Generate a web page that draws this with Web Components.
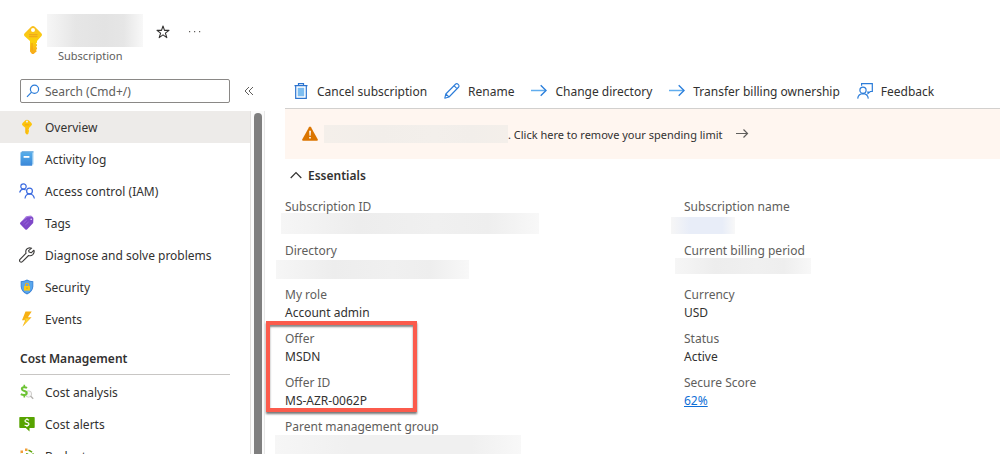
<!DOCTYPE html>
<html lang="en">
<head>
<meta charset="utf-8">
<meta name="viewport" content="width=device-width, initial-scale=1">
<title>Subscription</title>
<style>
  body { margin: 0; font: 12px/18px "Noto Sans", "Open Sans", sans-serif; color: #323130; background: #fff; }
</style>
</head>
<body>
<subscription-page></subscription-page>

<script>
const icons = {
  key: `<svg viewBox="0 0 18 28"><defs><linearGradient id="k" x2="0" y2="1"><stop stop-color="#f9bd1e"/><stop offset=".55" stop-color="#fbd10c"/><stop offset="1" stop-color="#f7a81c"/></linearGradient></defs><path fill="url(#k)" fill-rule="evenodd" d="M7.200.7q1.800-1.400 3.600 0l6.500 6.600q1.400 1.500 0 3L13 15v1.500l-1 1 1 1v1.300l-1 1 1 1V23l-1 1 .8 1.200L9.600 28H8l-2-2.400V15L.7 10.300q-1.400-1.500 0-3zM9 2a2 2 0 1 0 0 4 2 2 0 0 0 0-4z"/><path d="M5 8h8.500v1.200H5zm0 2h8.500v1.200H5z" fill="#f0a81a"/><path d="M7.500 17h1v8l-1-1z" fill="#f0a010"/></svg>`,
  smallkey: `<svg viewBox="0 0 16 16"><path fill="#fcc40c" fill-rule="evenodd" d="M6.400 1.300Q8 0 9.600 1.300l2.800 2.600q1.300 1.300 0 2.600L10 9v1l-.6.700.6.800v1l-.6.700.4.700L8.500 15.500h-.8l-1.200-1.300V9L3.600 6.500q-1.300-1.300 0-2.600zM8 1.500a1.100 1.100 0 1 0 0 2.200 1.100 1.100 0 0 0 0-2.200z"/><path fill="#f5ae10" d="M5.800 5h4.400v1.500H5.800zM6.500 9h1v5.500l-1-.8z"/></svg>`,
  star: `<svg viewBox="0 0 14 14" fill="none" stroke="#323130" stroke-width="1.100" stroke-linejoin="round"><path d="M7 1l1.500 4.400H13L9.400 8.100l1.400 4.500L7 9.900l-3.800 2.700 1.400-4.500L1 5.400h4.500z"/></svg>`,
  more: `<svg viewBox="0 0 14 14" fill="#605e5c"><path d="M1 6h1.200v1.200H1zm5 0h1.200v1.200H6zm5 0h1.200v1.200H11z"/></svg>`,
  search: `<svg viewBox="0 0 14 14" fill="none" stroke="#2b7cd9" stroke-width="1.200"><circle cx="8.500" cy="5.300" r="4.100"/><path d="M5.600 8.200L1 12.800"/></svg>`,
  collapse: `<svg viewBox="0 0 10 10" fill="none" stroke="#605e5c"><path d="M5 1L1 5l4 4M9 1L5 5l4 4"/></svg>`,
  log: `<svg viewBox="0 0 16 16"><defs><linearGradient id="l" x2="0" y2="1"><stop stop-color="#55adea"/><stop offset="1" stop-color="#3b87d8"/></linearGradient></defs><path fill="#a5d2f2" d="M3 .5h11.500v13H3z"/><path fill="url(#l)" d="M1.500 1.500h11.700v13.300H2.300q-.8 0-.8-.8z"/><path fill="#2f86cf" d="M1.500 1.500l1.500-1h11.500v.8z"/><path fill="#fff" d="M4.600 5h5.800v1.800H4.600z"/></svg>`,
  people: `<svg viewBox="0 0 16 16" fill="none" stroke="#3b6be0" stroke-width="1.200"><circle cx="4.500" cy="3.500" r="2.700"/><circle cx="10.500" cy="8" r="2.900"/><path d="M.6 9.500Q1.500 6.400 4.500 6.200l2.200.8M6 15.500q.5-4.400 4.500-4.600 4 .2 4.900 4.600"/></svg>`,
  tag: `<svg viewBox="0 0 16 16"><path fill="#a77be0" d="M7 1.200l5-.7 1.800 1.500L8 9 2 7z"/><path fill="#7f48c8" d="M8.300 2.200l4.700-.2q1.500 0 1.400 1.500L14.200 8 8 14.500q-.8.700-1.600 0L1.300 9.200q-.7-.8 0-1.600z"/><circle cx="12.200" cy="4.200" r=".8" fill="#e9dafa"/><path d="M4.500 8l3.300-3M6.300 10l3.300-3" stroke="#9b68dc"/></svg>`,
  wrench: `<svg viewBox="0 0 16 16" fill="none" stroke="#3b3a39" stroke-width="1.100" stroke-linejoin="round"><path d="M12.600 1.200Q9.600.1 7.700 2.200q-1.500 1.900-.6 4L1 12.300q-1 1.300 0 2.300 1.200 1 2.400 0L9.600 8.500q2.300.8 4.200-.9 2-2.100 1.100-4.400l-2.700 2.600L10.100 5l-.5-1.300z"/></svg>`,
  shield: `<svg viewBox="0 0 16 16"><path fill="#3a82d6" d="M8 .5q2.600 1.700 6.300 1.800V7.500Q14 12.500 8 15.600 2 12.500 1.700 7.500V2.300Q5.400 2.200 8 .5z"/><path fill="#5aa7ec" d="M8 1.500q2.300 1.300 5.500 1.500v4.500q-.3 4.200-5.500 7-5.200-2.800-5.500-7V3Q5.700 2.800 8 1.500z"/><path fill="#f8c818" d="M5 7h6v4.600H5z"/><path d="M6.400 7V5.700Q6.500 4.200 8 4.200t1.600 1.500V7" fill="none" stroke="#f2b31b" stroke-width="1.100"/><path fill="#c99400" d="M7.500 8.400h1v1.400h-1z"/></svg>`,
  bolt: `<svg viewBox="0 0 16 16"><path fill="#f7b012" d="M6.500.5h6.200L8.900 6.200h3.700L3.400 15.700l2.900-6.400H3z"/><path fill="#fdd835" d="M6.500 7.500h4l-5.600 6.300 2.300-5.200H4.500z"/></svg>`,
  analysis: `<svg viewBox="0 0 16 16"><circle cx="9.500" cy="10" r="3.200" fill="#f5f5f5" stroke="#d2d0ce"/><path stroke="#b3b0ad" stroke-width="1.300" d="M11.500 12l2.700 2.700"/><path fill="none" stroke="#6cc333" stroke-width="1.900" d="M8 4Q6.900 3.200 5 3.300 2.800 3.500 2.800 5q.1 1.300 2.500 2 2.600.7 2.500 2.200-.2 1.800-2.700 1.800-1.800 0-3.300-.9"/><path stroke="#6cc333" stroke-width="1.600" d="M5.300.8v2.500M5.300 11v2.500"/></svg>`,
  alert: `<svg viewBox="0 0 16 16"><path fill="#57a300" d="M1 1h14q.7 0 .7.700v9.600q0 .7-.7.700h-4.500v3.500L6.800 12H1q-.7 0-.7-.7V1.700q0-.7.700-.7z"/><path fill="none" stroke="#fff" stroke-width="1.200" d="M10 4.200q-1-.8-2.300-.7Q5.900 3.700 6 5q0 .9 1.900 1.400 2.200.5 2.100 1.700-.2 1.500-2.200 1.500-1.200 0-2.200-.7M8 2.200v1.500M8 9.500v1.500"/></svg>`,
  budget: `<svg viewBox="0 0 16 16" fill="none"><path d="M9.500 2.200q5 1.300 4.800 6.300-.5 5.500-6.300 6-5.700-.5-6.300-6 0-1.400.5-2.600" stroke="#57a300" stroke-width="1.400" stroke-dasharray="4 1.500"/><path d="M8 5v7M10 6.500Q6 5 6 7t4 2-4 2.500" stroke="#57a300"/><path fill="#f29d38" d="M1.500 2.500h2.500v2.500H1.500zM6 .5h2.500V3H6z"/></svg>`,
  trash: `<svg viewBox="0 0 16 16" fill="none"><path fill="#7dbdf0" d="M4.700 4.800h6.500v8.500H4.700z"/><path stroke="#2b73cf" stroke-width="1.200" d="M1.500 2.600h13M5.500 2.400V.7h5v1.700M2.700 2.800v12.500h10.600V2.800"/></svg>`,
  pencil: `<svg viewBox="0 0 16 16" fill="none" stroke="#2b7cd9" stroke-width="1.100" stroke-linejoin="round"><path d="M.8 15.200l1-4.200L11.700 1q1.200-.9 2.500.3t.5 2.700L5 14zM1.800 11L5 14M10 2.700l3.200 3.100"/></svg>`,
  arrow: `<svg viewBox="0 0 16 16" fill="none"><path stroke="#61adee" stroke-width="1.500" d="M0 7.500h14.500"/><path stroke="#2d80dc" stroke-width="1.400" d="M9.700 2.300l5.300 5.200-5.300 5.200"/></svg>`,
  feedback: `<svg viewBox="0 0 16 16" fill="none" stroke="#2b7cd9" stroke-width="1.200"><path d="M4.600 2.800V.7h10.700v7.800h-2l-2.300 2V8.200"/><circle cx="6" cy="7.200" r="3.100"/><path d="M.7 15.600q.5-4.800 5.300-5 4.800.2 5.300 5"/></svg>`,
  warning: `<svg viewBox="0 0 16 16"><path fill="#db7500" d="M7 1.300q1-1.500 2 0l6.700 12q.7 1.500-.9 1.500H1.200q-1.600 0-.9-1.500z"/><path fill="#fff" d="M7.200 4.800h1.700l-.3 5H7.500zM7.200 11h1.600v1.600H7.200z"/></svg>`,
  next: `<svg viewBox="0 0 14 14" fill="none" stroke="#605e5c" stroke-width="1.200"><path d="M1 6.500h11.500M8.500 2.500l4 4-4 4"/></svg>`,
  chevron: `<svg viewBox="0 0 12 12" fill="none" stroke="#323130" stroke-width="1.200"><path d="M.7 8L6 2.500 11.300 8"/></svg>`
};

function define(name, html, setup) {
  const template = document.createElement("template");
  template.innerHTML = html;
  customElements.define(name, class extends HTMLElement {
    constructor() {
      super();
      this.attachShadow({ mode: "open" }).append(template.content.cloneNode(true));
    }
    connectedCallback() { if (setup) setup(this, this.shadowRoot); }
  });
}

define("ui-icon", `
  <style>
    :host { display: block; flex: none; width: 16px; height: 16px; }
    div, svg { display: block; width: 100%; height: 100%; }
  </style><div></div>`,
  (el, root) => { root.querySelector("div").innerHTML = icons[el.getAttribute("name")]; });

define("masked-value", `
  <style>
    :host { display: block; flex: none; width: var(--w); height: var(--h);
      background: linear-gradient(90deg, var(--edge, #f6f6f6), var(--tone, #ededed) 30%, var(--mid, #f0f0f0) 60%, var(--tone, #eee) 80%, var(--edge, #f8f8f8)); }
  </style>`);

define("page-header", `
  <style>
    :host { display: flex; align-items: flex-start; height: 79px; padding: 0 24px; box-sizing: border-box; }
    .key { width: 18px; height: 28px; margin-top: 26px; }
    .title { margin: 14px 13px 0 5px; }
    masked-value { --w: 96px; --h: 33px; --tone: #e6e6e6; --mid: #e3e3e3; }
    p { margin: 0 0 0 11px; color: #605e5c; font-size: 11px; }
    button { border: 0; padding: 0; background: none; margin: 25px 18px 0 0; }
    button ui-icon { width: 14px; height: 14px; }
  </style>
  <ui-icon class="key" name="key"></ui-icon>
  <div class="title"><masked-value></masked-value><p>Subscription</p></div>
  <button aria-label="Add to favorites"><ui-icon name="star"></ui-icon></button>
  <button aria-label="More"><ui-icon name="more"></ui-icon></button>`);

define("nav-item", `
  <style>
    :host { display: block; }
    a { display: flex; align-items: center; gap: 10px; height: 32px; padding: 0 19px; color: inherit; text-decoration: none; }
    slot { display: block; padding-top: 2px; }
    :host([selected]) a { background: #edebe9; }
  </style>
  <a href="#"><slot></slot></a>`,
  (el, root) => {
    const icon = document.createElement("ui-icon");
    icon.setAttribute("name", el.getAttribute("icon"));
    root.querySelector("a").prepend(icon);
  });

define("side-nav", `
  <style>
    :host { display: flex; flex-direction: column; width: 265px; flex: none; min-height: 0; }
    .search { display: flex; align-items: center; gap: 14px; padding: 0 11px 8px 20px; }
    label { display: flex; flex: 1; align-items: center; gap: 5px; height: 24px; box-sizing: border-box; border: 1px solid #8a8886; border-radius: 2px; padding: 0 5px; }
    label ui-icon { width: 14px; height: 14px; }
    input { flex: 1; min-width: 0; height: 22px; box-sizing: border-box; border: 0; padding: 0; outline: 0; font: inherit; background: none; }
    input::placeholder { color: #605e5c; opacity: 1; }
    button { border: 0; padding: 0; background: none; }
    button ui-icon { width: 10px; height: 10px; }
    .body { display: flex; flex: 1; min-height: 0; }
    nav { flex: 1; overflow: hidden; border-right: 1px solid #e1dfdd; }
    h2 { margin: 9px 20px 1px; padding: 6px 0; border-bottom: 1px solid #c8c6c4; font-size: 12px; line-height: 18px; font-weight: 600; }
    .track { width: 8px; padding: 2px 2px 0 3px; border-right: 1px solid #e8e8e8; background: #fbfbfb; }
    .thumb { height: 100%; border-radius: 4px 4px 0 0; background: #7f7f7f; }
  </style>
  <div class="search">
    <label><ui-icon name="search"></ui-icon><input type="text" aria-label="Search" placeholder="Search (Cmd+/)"></label>
    <button aria-label="Collapse menu"><ui-icon name="collapse"></ui-icon></button>
  </div>
  <div class="body">
    <nav>
      <nav-item icon="smallkey" selected>Overview</nav-item>
      <nav-item icon="log">Activity log</nav-item>
      <nav-item icon="people">Access control (IAM)</nav-item>
      <nav-item icon="tag">Tags</nav-item>
      <nav-item icon="wrench">Diagnose and solve problems</nav-item>
      <nav-item icon="shield">Security</nav-item>
      <nav-item icon="bolt">Events</nav-item>
      <h2>Cost Management</h2>
      <nav-item icon="analysis">Cost analysis</nav-item>
      <nav-item icon="alert">Cost alerts</nav-item>
      <nav-item icon="budget">Budgets</nav-item>
    </nav>
    <div class="track"><div class="thumb"></div></div>
  </div>`);

define("command-button", `
  <style>
    :host { display: block; flex: none; }
    button { display: flex; align-items: center; gap: 8px; border: 0; padding: 0; background: none; color: inherit; font: inherit; white-space: nowrap; }
    .text { padding-top: 2px; }
  </style>
  <button><slot name="icon"></slot><span class="text"><slot></slot></span></button>`);

define("command-bar", `
  <style>
    :host { display: flex; align-items: center; gap: 17px; height: 30px; padding: 0 8px 5px; box-sizing: border-box; border-bottom: 1px solid #d2d0ce; overflow: hidden; }
  </style>
  <command-button><ui-icon slot="icon" name="trash"></ui-icon>Cancel subscription</command-button>
  <command-button><ui-icon slot="icon" name="pencil"></ui-icon>Rename</command-button>
  <command-button><ui-icon slot="icon" name="arrow"></ui-icon>Change directory</command-button>
  <command-button><ui-icon slot="icon" name="arrow"></ui-icon>Transfer billing ownership</command-button>
  <command-button><ui-icon slot="icon" name="feedback"></ui-icon>Feedback</command-button>`);

define("info-banner", `
  <style>
    :host { display: flex; align-items: center; height: 50px; padding: 0 17px; background: #fff6f0; font-size: 11px; }
    masked-value { --w: 184px; --h: 18px; --tone: #f2eeea; --mid: #f3efeb; --edge: #f4efea; margin-left: 6px; }
    a { display: flex; align-items: center; gap: 12px; color: inherit; text-decoration: none; white-space: nowrap; }
    a ui-icon { width: 14px; height: 14px; }
    .text { padding-top: 2px; }
  </style>
  <ui-icon name="warning"></ui-icon><masked-value></masked-value>
  <a href="#"><span class="text">. Click here to remove your spending limit</span><ui-icon name="next"></ui-icon></a>`);

define("essentials-field", `
  <style>
    :host { display: block; height: 36px; }
    .label { color: #605e5c; }
  </style>
  <div class="label"><slot name="label"></slot></div><div><slot></slot></div>`);

define("field-highlight", `
  <style>
    :host { display: grid; gap: 8px; position: relative; }
    :host::after { content: ""; position: absolute; top: -9px; bottom: -2px; left: -19px; width: 151px; box-sizing: border-box;
      border: 4px solid #fb5b4c; box-shadow: 0 2px 2px #777, inset 0 2px 2px #888; pointer-events: none; }
  </style><slot></slot>`);

define("essentials-panel", `
  <style>
    :host { display: block; }
    button { display: flex; align-items: center; gap: 6px; height: 34px; padding: 0 5px; border: 0; background: none; color: inherit; font: inherit; font-weight: 600; }
    button ui-icon { width: 12px; height: 12px; }
    .columns { display: grid; grid-template-columns: 5fr 4fr; gap: 4px; padding-top: 5px; }
    .column { display: grid; gap: 8px; align-content: start; }
    a { color: #0f6fd6; text-decoration: underline; }
    .id { --w: 258px; --h: 21px; margin: -3px 0 0 -4px; }
    .dir { --w: 193px; --h: 19px; margin: 0 0 0 -9px; }
    .group { --w: 246px; --h: 20px; --tone: #f0f0f0; margin: -1px 0 0 -10px; }
    .name { --w: 64px; --h: 17px; --tone: #e8edf8; --mid: #e8edf8; margin: 1px 0 0 -13px; }
    .period { --w: 136px; --h: 16px; margin: -2px 0 0 -9px; }
  </style>
  <button aria-expanded="true"><ui-icon name="chevron"></ui-icon>Essentials</button>
  <div class="columns">
    <div class="column">
      <essentials-field><span slot="label">Subscription ID</span><masked-value class="id"></masked-value></essentials-field>
      <essentials-field><span slot="label">Directory</span><masked-value class="dir"></masked-value></essentials-field>
      <essentials-field><span slot="label">My role</span>Account admin</essentials-field>
      <field-highlight>
        <essentials-field><span slot="label">Offer</span>MSDN</essentials-field>
        <essentials-field><span slot="label">Offer ID</span>MS-AZR-0062P</essentials-field>
      </field-highlight>
      <essentials-field><span slot="label">Parent management group</span><masked-value class="group"></masked-value></essentials-field>
    </div>
    <div class="column">
      <essentials-field><span slot="label">Subscription name</span><masked-value class="name"></masked-value></essentials-field>
      <essentials-field><span slot="label">Current billing period</span><masked-value class="period"></masked-value></essentials-field>
      <essentials-field><span slot="label">Currency</span>USD</essentials-field>
      <essentials-field><span slot="label">Status</span>Active</essentials-field>
      <essentials-field><span slot="label">Secure Score</span><a href="#">62%</a></essentials-field>
    </div>
  </div>`);

define("subscription-page", `
  <style>
    :host { display: flex; flex-direction: column; height: 100vh; overflow: hidden; }
    .content { display: flex; flex: 1; min-height: 0; }
    main { flex: 1; min-width: 0; padding-left: 20px; }
  </style>
  <page-header></page-header>
  <div class="content">
    <side-nav></side-nav>
    <main><command-bar></command-bar><info-banner></info-banner><essentials-panel></essentials-panel></main>
  </div>`);
</script>
</body>
</html>
